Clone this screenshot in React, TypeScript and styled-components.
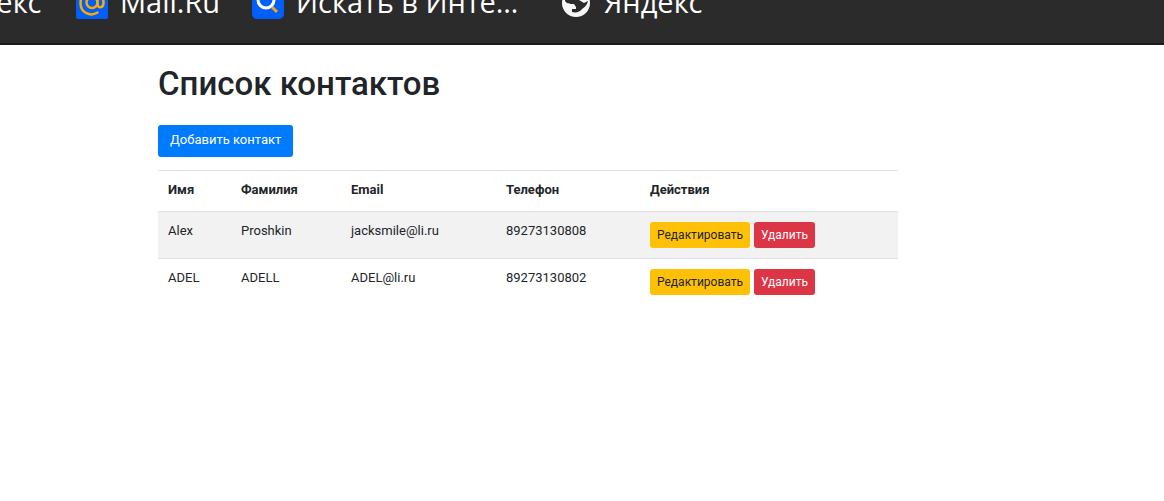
import React from 'react';
import styled, { createGlobalStyle, css } from 'styled-components';

const GlobalStyle = createGlobalStyle`
  *, *::before, *::after { box-sizing: border-box; }
  body {
    margin: 0;
    background: #fff;
    color: #212529;
    font: 400 13px/18px Roboto, "Liberation Sans", sans-serif;
  }
`;

const BookmarksBar = styled.nav`
  height: 45px;
  overflow: hidden;
  background: #2b2b2b;
  border-bottom: 2px solid #1b1b1b;
`;

const BookmarkList = styled.div`
  display: flex;
  gap: 32px;
  margin: -13px 0 0 -101px;
`;

const Bookmark = styled.a<{ $width: number }>`
  display: flex;
  flex: none;
  gap: 12px;
  width: ${(p) => p.$width}px;
  color: #fff;
  font: 400 29px/30px "Open Sans", "Noto Sans", sans-serif;
  white-space: nowrap;
  text-decoration: none;

  svg {
    flex: none;
    width: 32px;
    height: 32px;
  }
`;

const Page = styled.main`
  max-width: 898px;
  padding: 19px 0 24px 158px;
`;

const Title = styled.h1`
  margin: 0 0 21px;
  font-size: 33px;
  line-height: 40px;
  font-weight: 500;
`;

type Variant = 'primary' | 'warning' | 'danger';

const palette: Record<Variant, { background: string; color: string }> = {
  primary: { background: '#007bff', color: '#fff' },
  warning: { background: '#ffc107', color: '#212529' },
  danger: { background: '#dc3545', color: '#fff' },
};

const Button = styled.button<{ $variant: Variant; $small?: boolean }>`
  display: block;
  border: 0;
  border-radius: 3px;
  background: ${(p) => palette[p.$variant].background};
  color: ${(p) => palette[p.$variant].color};
  font-family: inherit;
  white-space: nowrap;
  cursor: pointer;
  ${(p) =>
    p.$small
      ? css`
          padding: 4px 7px;
          font-size: 12px;
          line-height: 18px;
        `
      : css`
          padding: 6px 12px 8px;
          font-size: 13px;
          line-height: 18px;
        `}
`;

const Table = styled.table`
  width: 100%;
  margin-top: 13px;
  table-layout: fixed;
  border-collapse: separate;
  border-spacing: 0;

  th, td {
    padding: 10px;
    border-top: 1px solid #dee2e6;
    text-align: left;
    vertical-align: top;
  }

  th {
    padding-bottom: 12px;
    font-weight: 700;
  }

  tbody tr:nth-child(odd) { background: #f2f2f2; }
`;

const Column = styled.col<{ $width?: number }>`
  width: ${(p) => (p.$width ? `${p.$width}px` : 'auto')};
`;

const Actions = styled.div`
  display: flex;
  gap: 4px;
`;

const GlobeIcon = () => (
  <svg viewBox="0 0 32 32" aria-hidden="true">
    <circle cx="16" cy="16" r="14" fill="#f7f7f7" />
    <path
      d="M5 14c2 3 5 3 9 3l2 3v2h-4v3c4 1 8 0 10-3 3-2 5-4 6-8l-4 2-5-3-5-1-2-3 5-6C10 3 5 7 5 14z"
      fill="#2b2b2b"
    />
  </svg>
);

const MailIcon = () => (
  <svg viewBox="0 0 32 32" aria-hidden="true">
    <rect width="32" height="32" rx="2" fill="#005ff9" />
    <g fill="none" stroke="#ffa800" strokeWidth="2.5" strokeLinecap="round">
      <circle cx="16" cy="15.5" r="5.5" />
      <path d="M21.5 10v7c0 5 6 4 6-1 0-15-23-15-23 0 0 10 10 14 17 9.500" />
    </g>
  </svg>
);

const SearchIcon = () => (
  <svg viewBox="0 0 32 32" aria-hidden="true">
    <rect width="32" height="32" rx="5" fill="#005ff9" />
    <circle cx="14" cy="13" r="8" fill="none" stroke="#fff" strokeWidth="3" />
    <path d="M20 20l5 5" fill="none" stroke="#f6a51a" strokeWidth="3" />
  </svg>
);

const bookmarks = [
  { label: 'Яндекс', Icon: GlobeIcon, width: 145 },
  { label: 'Mail.Ru', Icon: MailIcon, width: 144 },
  { label: 'Искать в Инте…', Icon: SearchIcon, width: 276 },
  { label: 'Яндекс', Icon: GlobeIcon, width: 145 },
];

const contacts = [
  { name: 'Alex', surname: 'Proshkin', email: 'jacksmile@li.ru', phone: '89273130808' },
  { name: 'ADEL', surname: 'ADELL', email: 'ADEL@li.ru', phone: '89273130802' },
];

export default function App() {
  return (
    <>
      <GlobalStyle />
      <BookmarksBar>
        <BookmarkList>
          {bookmarks.map(({ label, Icon, width }, i) => (
            <Bookmark key={i} href="#" $width={width}>
              <Icon />
              <span>{label}</span>
            </Bookmark>
          ))}
        </BookmarkList>
      </BookmarksBar>
      <Page>
        <Title>Список контактов</Title>
        <Button type="button" $variant="primary">Добавить контакт</Button>
        <Table>
          <colgroup>
            <Column $width={73} />
            <Column $width={110} />
            <Column $width={155} />
            <Column $width={144} />
            <Column />
          </colgroup>
          <thead>
            <tr>
              <th scope="col">Имя</th>
              <th scope="col">Фамилия</th>
              <th scope="col">Email</th>
              <th scope="col">Телефон</th>
              <th scope="col">Действия</th>
            </tr>
          </thead>
          <tbody>
            {contacts.map((c) => (
              <tr key={c.phone}>
                <td>{c.name}</td>
                <td>{c.surname}</td>
                <td>{c.email}</td>
                <td>{c.phone}</td>
                <td>
                  <Actions>
                    <Button type="button" $variant="warning" $small>Редактировать</Button>
                    <Button type="button" $variant="danger" $small>Удалить</Button>
                  </Actions>
                </td>
              </tr>
            ))}
          </tbody>
        </Table>
      </Page>
    </>
  );
}
